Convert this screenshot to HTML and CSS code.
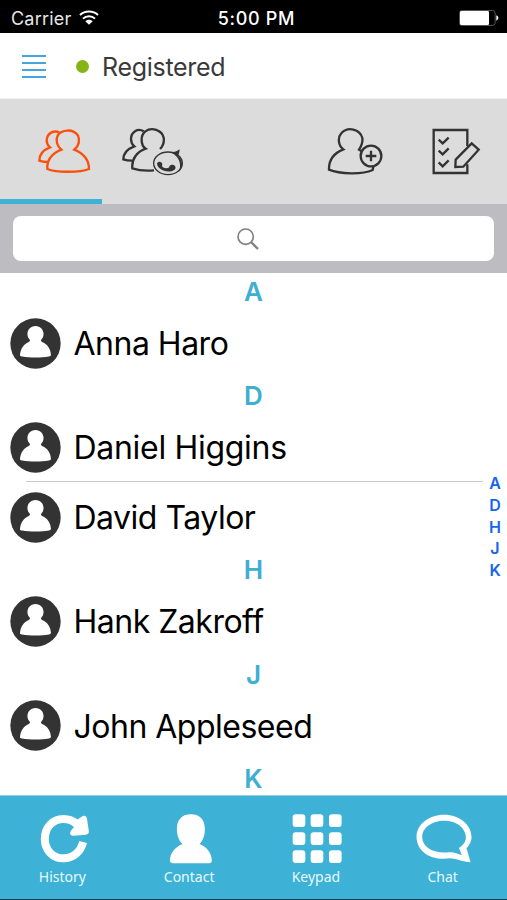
FILE: index.html
```html
<!DOCTYPE html>
<html lang="en">
<head>
  <meta charset="UTF-8" />
  <meta name="viewport" content="width=device-width, initial-scale=1.0"/>
  <title>Contacts</title>
  <link rel="stylesheet" href="styles.css">
</head>
<body>

  <!-- Shared avatar shape used by every contact row -->
  <svg class="symbols" width="0" height="0">
    <symbol id="avatar" viewBox="0 0 152 152">
      <circle cx="76" cy="76" r="75" fill="#333"/>
      <path fill="#fff" d="M76 24C91 24 100 35 100 48C100 56 97 61 92 66C93 70 97 72 103 75C114 82 121 94 122 109C122 113 120 114 116 115C92 119 60 119 36 115C31 114 29 113 30 109C31 95 38 82 49 75C55 72 58 70 60 66C55 61 52 56 52 48C52 35 61 24 76 24Z"/>
    </symbol>
  </svg>

  <div class="app">
    <div class="status-bar">
      <div class="carrier">
        <span>Carrier</span>
        <svg class="wifi" viewBox="0 0 60 48" fill="none" stroke="#fff" stroke-width="6">
          <path d="M3 15C18 1 42 1 57 15"/>
          <path d="M12 26C22 16 38 16 48 26"/>
          <path d="M30 44L19 34C25 28 35 28 41 34Z" fill="#fff" stroke="none"/>
        </svg>
      </div>
      <div class="time">5:00 PM</div>
      <svg class="battery" viewBox="0 0 120 48">
        <rect x="1.5" y="1.5" width="107" height="45" rx="8" fill="none" stroke="#555" stroke-width="3"/>
        <rect x="3" y="3" width="87" height="42" rx="4" fill="#fff"/>
        <path d="M112 16C120 19 120 29 112 32Z" fill="#fff"/>
      </svg>
    </div>

    <div class="header">
      <div class="menu-button"><i></i><i></i><i></i><i></i></div>
      <span class="status-dot"></span>
      <span class="status-text">Registered</span>
    </div>

    <div class="tools">
      <div class="tool active">
        <svg width="56" height="50" viewBox="108 87 168 150">
          <path d="M184 155C171 145 166 126 173 113C184 93 221 92 234 113C241 127 236 145 223 155C242 163 267 180 267 213C240 224 168 224 142 213C140 183 160 165 184 155Z"/>
          <path d="M179 104C162 95 141 105 140 127C140 137 144 143 150 148C134 154 118 166 118 188C125 191 133 192 142 192"/>
        </svg>
      </div>
      <div class="tool all">
        <svg width="64" height="50" viewBox="363 87 192 150">
          <path d="M462 217C440 219 415 217 397 211C394 182 412 161 437 152C421 141 421 112 436 100C455 86 486 96 491 119C493 132 489 144 480 153"/>
          <path d="M431 100C413 89 393 102 393 123C393 133 397 140 403 145C387 151 370 164 370 184C378 187 387 188 396 188"/>
          <ellipse cx="504" cy="196" rx="43" ry="34" stroke-width="4"/>
          <path class="solid" d="M511 163C523 163 532 160 539 154C539 163 536 169 534 174C550 188 550 209 536 222C545 203 541 176 511 163Z"/>
          <path class="solid" d="M471 196C474 189 485 190 487 198C486 203 485 205 489 208C494 212 503 212 508 208C507 202 514 198 521 201C528 204 528 211 524 215C512 223 494 222 483 214C475 209 471 203 471 196Z"/>
        </svg>
      </div>
      <div class="tool add">
        <svg width="58" height="50" viewBox="216 87 174 150">
          <path d="M358 206L356 216C326 230 257 229 225 215C224 183 243 164 268 154C253 143 250 119 262 106C281 84 318 93 325 120C327 133 322 144 315 155L323 160"/>
          <circle cx="351" cy="174" r="31"/>
          <path d="M351 158V190M335 174H367"/>
        </svg>
      </div>
      <div class="tool edit">
        <svg width="50" height="50" viewBox="531 87 150 150">
          <path d="M640 144V96H539V225H640V199"/>
          <path d="M554 125L566 136L584 119M554 158L566 169L584 151M554 193L566 205L584 187"/>
          <path d="M605 185L653 136L674 155L628 206L604 207Z"/>
        </svg>
      </div>
    </div>

    <div class="search-bar">
      <div class="search-field">
        <svg width="22" height="22" viewBox="0 0 66 66" fill="none" stroke="#808080">
          <circle cx="26" cy="26" r="23" stroke-width="5"/>
          <path d="M42 42L63 63" stroke-width="7"/>
        </svg>
      </div>
    </div>

    <div class="contact-list">
      <div class="letter">A</div>
      <div class="contact"><svg class="avatar"><use href="#avatar"/></svg><span class="name">Anna Haro</span></div>
      <div class="letter">D</div>
      <div class="contact divided"><svg class="avatar"><use href="#avatar"/></svg><span class="name wide">Daniel Higgins</span></div>
      <div class="contact"><svg class="avatar"><use href="#avatar"/></svg><span class="name">David Taylor</span></div>
      <div class="letter">H</div>
      <div class="contact"><svg class="avatar"><use href="#avatar"/></svg><span class="name">Hank Zakroff</span></div>
      <div class="letter">J</div>
      <div class="contact"><svg class="avatar"><use href="#avatar"/></svg><span class="name">John Appleseed</span></div>
      <div class="letter">K</div>

      <!-- Quick index floating over the list -->
      <div class="index">
        <span>A</span><span>D</span><span>H</span><span>J</span><span>K</span>
      </div>
    </div>

    <div class="bottom-nav">
      <div class="nav-item">
        <svg width="51" height="51" viewBox="113.6 84 153 153">
          <path d="M249 171C241 203 217 220 190 220C157 220 134 194 134 162C134 127 158 102 190 102C209 102 221 109 231 118" fill="none" stroke="#fff" stroke-width="24"/>
          <path d="M248 93C256 91 260 96 261 104L266 137C267 145 264 149 257 149L221 152C211 153 207 146 212 138L222 125L216 118L231 104Z" fill="#fff"/>
        </svg>
        <span>History</span>
      </div>
      <div class="nav-item">
        <svg width="44" height="51" viewBox="504.4 84 132 153">
          <path fill="#fff" d="M573 88C602 88 615 107 615 132C615 151 609 167 599 177C621 185 636 206 636 228C635 233 632 235 625 235H521C514 235 510 232 510 226C511 204 526 185 548 177C537 167 531 151 531 132C531 107 544 88 573 88Z"/>
        </svg>
        <span>Contact</span>
      </div>
      <div class="nav-item">
        <svg width="51" height="51" viewBox="112.1 84 153 153" fill="#fff">
          <rect x="117" y="88" width="38" height="38" rx="9"/><rect x="171" y="88" width="38" height="38" rx="9"/><rect x="226" y="88" width="38" height="38" rx="9"/>
          <rect x="117" y="142" width="38" height="38" rx="9"/><rect x="171" y="142" width="38" height="38" rx="9"/><rect x="226" y="142" width="38" height="38" rx="9"/>
          <rect x="117" y="196" width="38" height="38" rx="9"/><rect x="171" y="196" width="38" height="38" rx="9"/><rect x="226" y="196" width="38" height="38" rx="9"/>
        </svg>
        <span>Keypad</span>
      </div>
      <div class="nav-item">
        <svg width="57" height="51" viewBox="483.4 84 171 153">
          <path fill="#fff" fill-rule="evenodd" d="M571 89C617 89 653 119 653 157C653 170 646 182 638 190L650 232C622 230 605 220 588 220C528 228 488 197 488 155C488 118 525 89 571 89ZM571 107C534 107 505 128 505 156C505 185 536 207 585 202C600 200 610 207 624 210L615 189C628 181 636 171 636 157C636 129 608 107 571 107Z"/>
        </svg>
        <span>Chat</span>
      </div>
    </div>
  </div>

</body>
</html>
```
FILE: styles.css
```css
* {
  box-sizing: border-box;
}

body {
  margin: 0;
  font-family: Inter, 'Liberation Sans', sans-serif;
  background-color: #fff;
}

.symbols {
  position: absolute;
}

.app {
  display: flex;
  flex-direction: column;
  width: 507px;
  height: 900px;
  overflow: hidden;
}

/* Status bar */
.status-bar {
  display: flex;
  align-items: center;
  justify-content: space-between;
  height: 33px;
  padding: 3px 8px 0 11px;
  background-color: #000;
  color: #fff;
  font-size: 18px;
}

.carrier {
  display: flex;
  align-items: center;
  gap: 8px;
  width: 160px;
  color: #e6e6e6;
  letter-spacing: 0.2px;
}

.wifi {
  width: 20px;
  height: 16px;
}

.time {
  flex: 1;
  padding-left: 3px;
  text-align: center;
  font-weight: 500;
  letter-spacing: 0.7px;
}

.battery {
  width: 40px;
  height: 16px;
  margin-left: 120px;
}

/* Registration header */
.header {
  display: flex;
  align-items: center;
  height: 66px;
  padding: 2px 0 0 22px;
  border-bottom: 1px solid #f2f2f2;
}

.menu-button {
  display: flex;
  flex-direction: column;
  gap: 5px;
  width: 24px;
}

.menu-button i {
  height: 2px;
  background-color: #45a5dc;
}

.status-dot {
  width: 13px;
  height: 13px;
  margin-left: 30px;
  border-radius: 50%;
  background-color: #86b417;
}

.status-text {
  margin-left: 13px;
  color: #3a3a3a;
  font-size: 25px;
  letter-spacing: -0.3px;
}

/* Contact tools */
.tools {
  display: flex;
  height: 105px;
  background-color: #dcdcdc;
}

.tool {
  padding-top: 28px;
}

.tool svg {
  display: block;
  fill: none;
  stroke: #333;
  stroke-width: 7;
}

.tool .solid {
  fill: #333;
  stroke: none;
}

.tool.active {
  width: 102px;
  padding-left: 36px;
  border-bottom: 5px solid #3eb2d6;
}

.tool.active svg {
  stroke: #fb4f0b;
}

.tool.all {
  margin-left: 19px;
}

.tool.add {
  margin-left: 141px;
}

.tool.edit {
  margin-left: 47px;
}

/* Search */
.search-bar {
  height: 69px;
  padding: 12px 13px;
  background-color: #bdbcc1;
}

.search-field {
  display: flex;
  align-items: center;
  justify-content: center;
  height: 45px;
  padding-right: 12px;
  border-radius: 8px;
  background-color: #fff;
}

/* Contact list */
.contact-list {
  position: relative;
  height: 522px;
}

.letter {
  height: 34.8px;
  padding-top: 2px;
  color: #3eaed2;
  font-size: 26px;
  font-weight: 600;
  line-height: 34px;
  text-align: center;
}

.contact {
  position: relative;
  display: flex;
  align-items: center;
  height: 69.6px;
  padding: 1px 0 0 10px;
}

.contact.divided::after {
  content: '';
  position: absolute;
  left: 26px;
  right: 24px;
  bottom: 0;
  height: 1px;
  background-color: #c8c9cc;
}

.avatar {
  width: 51px;
  height: 51px;
}

.name {
  margin-left: 12.5px;
  padding-top: 1px;
  color: #000;
  font-size: 32px;
  letter-spacing: -0.5px;
}

.name.wide {
  letter-spacing: -0.3px;
}

.index {
  position: absolute;
  top: 200px;
  right: 0;
  display: flex;
  flex-direction: column;
  width: 24px;
  color: #1664f0;
  font-size: 16px;
  font-weight: 600;
  line-height: 21.8px;
  text-align: center;
}

/* Bottom navigation */
.bottom-nav {
  display: flex;
  height: 105px;
  border-top: 1px solid #8fd0e4;
  border-bottom: 1px solid #0d3c4c;
  background-color: #3db2d6;
}

.nav-item {
  display: flex;
  flex: 1;
  flex-direction: column;
  align-items: center;
  padding-top: 17px;
  color: #e8f8fc;
  font-family: 'Noto Sans', sans-serif;
  font-size: 14px;
}

.nav-item span {
  margin-top: 3px;
  padding-right: 2px;
  line-height: 20px;
}
```
